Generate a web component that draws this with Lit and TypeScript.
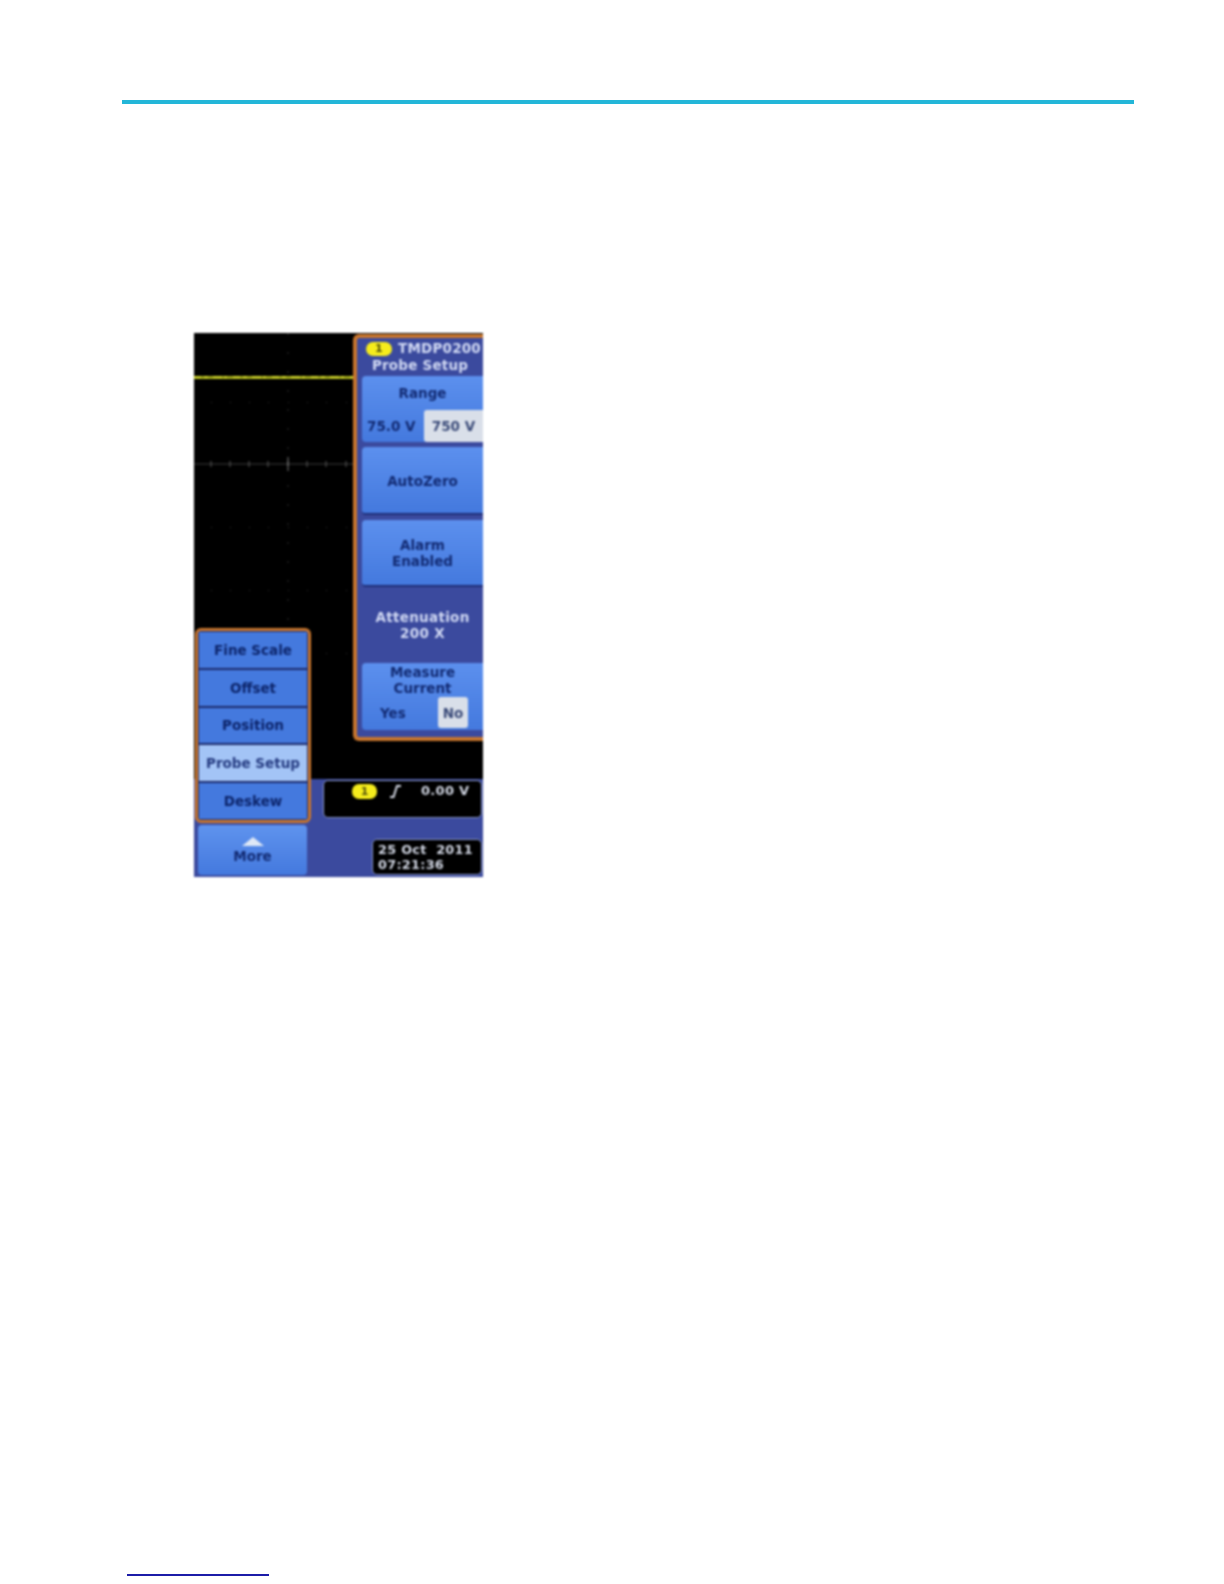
import { LitElement, html, css, svg } from "lit";
import { customElement } from "lit/decorators.js";

const ticks = [17, 36, 55, 74, 94, 113, 132, 152];
const dotRows = [69, 194, 257, 320];

@customElement("app-root")
export class AppRoot extends LitElement {
  static styles = css`
    :host { display: block; width: 1224px; height: 1584px; background: #fff; overflow: hidden; font-family: "DejaVu Sans", sans-serif; }
    .rule { height: 4px; background: #23b6d8; margin: 100px 90px 0 122px; }
    .scope { position: relative; width: 289px; height: 544px; margin: 229px 0 0 194px; background: linear-gradient(#000 0 446px, #3b4a9e 446px); display: flex; justify-content: space-between; overflow: hidden; filter: blur(0.85px); font-weight: 700; font-size: 13.5px; line-height: 16px; }
    .grid { position: absolute; left: 0; top: 0; }
    .left { position: relative; width: 117px; display: flex; flex-direction: column; justify-content: flex-end; padding: 0 0 2px 1px; box-sizing: border-box; }
    .menu { box-sizing: border-box; height: 195px; border: 3px solid #c8762e; border-radius: 6px; padding: 1px; display: flex; flex-direction: column; gap: 2px; background: #1c2a6c; }
    .menu div { flex: 1; display: flex; align-items: center; justify-content: center; background: #4479de; color: #0c246a; white-space: nowrap; }
    .menu div.on { background: #a3c4f6; color: #243a80; }
    .more { box-sizing: border-box; height: 50px; margin: 2px 4px 0 3px; border-radius: 4px; background: linear-gradient(#5f93ee, #4479de); color: #122a72; display: flex; flex-direction: column; align-items: center; padding-top: 12px; gap: 2px; }
    .tri { width: 0; height: 0; border: 11px solid transparent; border-top: 0; border-bottom: 9px solid #dfe8f6; }
    .right { position: relative; width: 160px; display: flex; flex-direction: column; align-items: flex-end; padding-top: 1px; box-sizing: border-box; }
    .panel { box-sizing: border-box; width: 130px; height: 407px; border: 4px solid #c8762e; border-right: 0; border-radius: 6px 0 0 6px; background: #3b4a9e; padding: 2px 0 0 5px; }
    .head { height: 36px; color: #d2daf4; line-height: 17px; letter-spacing: .2px; }
    .head .top { display: flex; align-items: center; gap: 6px; padding-left: 4px; white-space: nowrap; }
    .head .sub { text-align: center; margin-right: 5px; }
    .badge { display: flex; align-items: center; justify-content: center; background: #f5ec1c; color: #55550c; border-radius: 7px; font-size: 11px; line-height: 12px; flex: none; }
    .b1 { width: 26px; height: 14px; }
    .btn { background: linear-gradient(#5c90ee, #4479de); color: #122a72; border-radius: 4px 0 0 4px; border-bottom: 2px solid #1f2e78; box-sizing: border-box; text-align: center; margin-bottom: 5px; display: flex; flex-direction: column; justify-content: center; }
    .range { height: 66px; justify-content: flex-start; padding-top: 9px; border-bottom: 0; }
    .opts { display: flex; align-items: center; justify-content: space-between; margin-top: 9px; padding-left: 5px; white-space: nowrap; }
    .sel { width: 59px; height: 32px; display: flex; align-items: center; justify-content: center; background: #d9dfe9; color: #3a4a78; border-radius: 3px 0 0 3px; }
    .az { height: 68px; padding-top: 2px; }
    .alarm { height: 67px; margin-bottom: 0; }
    .atten { height: 76px; display: flex; flex-direction: column; justify-content: center; align-items: center; color: #d2daf4; letter-spacing: .3px; box-sizing: border-box; }
    .measure { height: 67px; justify-content: flex-start; padding-top: 1px; margin: 0; border-bottom: 0; }
    .yn { display: flex; align-items: center; justify-content: space-between; padding: 0 15px 0 18px; margin-top: 1px; height: 31px; }
    .no { width: 30px; height: 31px; background: #d9dfe9; color: #3a4a78; display: flex; align-items: center; justify-content: center; border-radius: 3px; }
    .trig { box-sizing: border-box; margin: 39px 1px 0 0; width: 159px; height: 38px; background: #000; border: 1.5px solid #8a96c8; border-radius: 5px; color: #d4d9e6; display: flex; align-items: flex-start; padding-top: 2px; white-space: nowrap; }
    .trig .badge { width: 25px; height: 15px; margin: 1px 0 0 28px; }
    .trig svg { margin: 0 0 0 12px; }
    .trig .v { margin-left: 18px; font-size: 13px; letter-spacing: .3px; }
    .date { box-sizing: border-box; margin: 21px 1px 0 0; width: 110px; height: 36px; background: #000; border: 1.5px solid #8a96c8; border-radius: 5px; color: #d4d9e6; font-size: 12.8px; line-height: 15px; padding: 2px 0 0 5px; letter-spacing: .3px; white-space: pre; }
    .foot { height: 2px; width: 142px; background: #1c1ca8; margin: 697px 0 0 127px; }
  `;

  render() {
    return html`
      <div class="rule"></div>
      <div class="scope">
        <svg class="grid" width="289" height="446" viewBox="0 0 289 446">
          <line x1="0" y1="131" x2="160" y2="131" stroke="#3c3c3c"></line>
          ${ticks.map((x) => svg`<line x1=${x} y1="128" x2=${x} y2="134" stroke="#5a5a5a"></line>`)}
          <line x1="94" y1="124" x2="94" y2="138" stroke="#7a7a7a"></line>
          <line x1="94" y1="0" x2="94" y2="446" stroke="#2c2c2c" stroke-dasharray="2 17"></line>
          ${dotRows.map((y) => ticks.map((x) => svg`<rect x=${x} y=${y} width="1" height="1" fill="#2c2c2c"></rect>`))}
          <line x1="0" y1="44.5" x2="159" y2="44.5" stroke="#a4ac1c" stroke-width="3"></line>
          <line x1="0" y1="44" x2="159" y2="44" stroke="#d0d42c" stroke-width="2" stroke-dasharray="7 3 4 5 9 2 3 6"></line>
        </svg>
        <div class="left">
          <div class="menu">
            <div>Fine Scale</div>
            <div>Offset</div>
            <div>Position</div>
            <div class="on">Probe Setup</div>
            <div>Deskew</div>
          </div>
          <div class="more"><span class="tri"></span><span>More</span></div>
        </div>
        <div class="right">
          <div class="panel">
            <div class="head">
              <div class="top"><span class="badge b1">1</span><span>TMDP0200</span></div>
              <div class="sub">Probe Setup</div>
            </div>
            <div class="btn range">
              <div>Range</div>
              <div class="opts"><span>75.0 V</span><span class="sel">750 V</span></div>
            </div>
            <div class="btn az">AutoZero</div>
            <div class="btn alarm">Alarm<br />Enabled</div>
            <div class="atten"><span>Attenuation</span><span>200 X</span></div>
            <div class="btn measure">
              <div>Measure<br />Current</div>
              <div class="yn"><span>Yes</span><span class="no">No</span></div>
            </div>
          </div>
          <div class="trig">
            <span class="badge">1</span>
            <svg width="14" height="16" viewBox="0 0 14 16"><path d="M1 14h3.5L8 3h4" fill="none" stroke="#d8dce8" stroke-width="2"></path></svg>
            <span class="v">0.00 V</span>
          </div>
          <div class="date">25 Oct  2011
07:21:36</div>
        </div>
      </div>
      <div class="foot"></div>
    `;
  }
}
